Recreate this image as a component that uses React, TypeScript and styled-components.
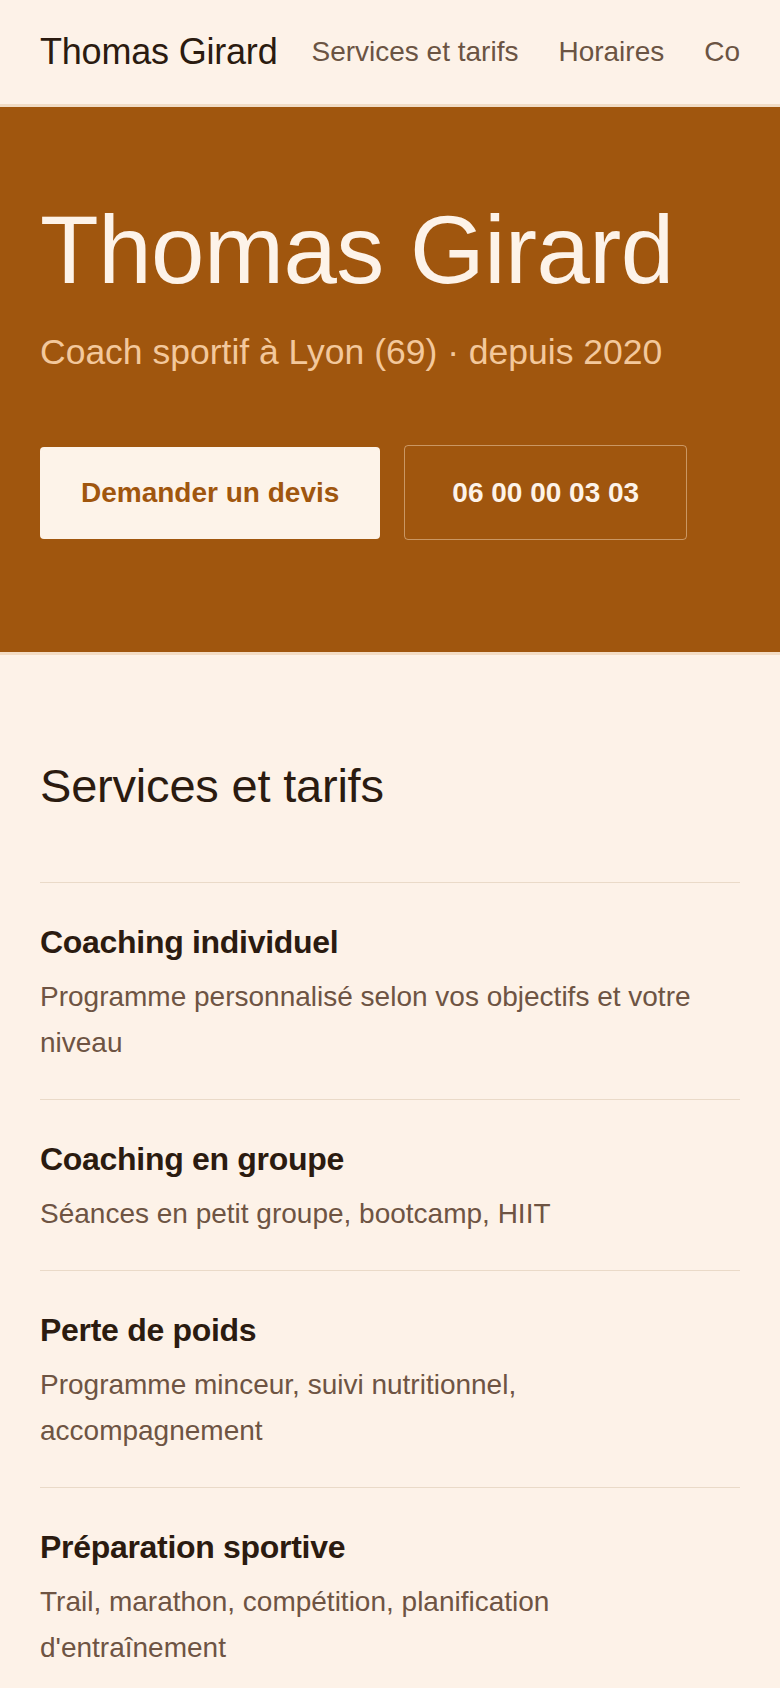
import React, {FC} from 'react';
import styled, {createGlobalStyle} from 'styled-components';

const GlobalStyle=createGlobalStyle`
html,body{
margin:0;
padding:0;
background:#fdf2e8;
}
body{
font-family:"Liberation Sans", Arial, sans-serif;
color:#2b1b10;
}
*{box-sizing:border-box;}
`;

const Page=styled.div`
display:flex;
flex-direction:column;
width:100%;
background:#fdf2e8;
`;

const Header=styled.header`
display:flex;
align-items:center;
height:107px;
padding:0 40px;
border-bottom:3px solid #f0dcc6;
gap:34px;
`;

const Logo=styled.div`
font-size:36px;
color:#2b1b10;
white-space:nowrap;
flex-shrink:0;
letter-spacing:-0.2px;
`;

const Nav=styled.nav`
display:flex;
gap:40px;
flex:1;
min-width:0;
overflow:hidden;
`;

const NavLink=styled.a`
font-size:28px;
color:#6b5443;
white-space:nowrap;
text-decoration:none;
flex-shrink:0;
`;

const Hero=styled.section`
display:flex;
flex-direction:column;
background:#a0560e;
padding:91px 40px 112px;
border-bottom:3px solid #f3dcc4;
`;

const HeroTitle=styled.h1`
margin:0;
font-size:96px;
font-weight:400;
line-height:104px;
color:#fdf3e9;
letter-spacing:-0.5px;
`;

const HeroSub=styled.p`
margin:27px 0 0;
font-size:35.5px;
line-height:46px;
color:#f3c89c;
`;

const Actions=styled.div`
display:flex;
align-items:center;
gap:24px;
margin-top:70px;
`;

const Button=styled.a<{$outline?:boolean}>`
display:flex;
align-items:center;
justify-content:center;
height:${p=>p.$outline?'95px':'92px'};
padding:0 ${p=>p.$outline?'47px':'41px'};
border-radius:4px;
font-size:28px;
font-weight:700;
text-decoration:none;
white-space:nowrap;
background:${p=>p.$outline?'transparent':'#fdf3e9'};
color:${p=>p.$outline?'#fdf3e9':'#a0560e'};
border:${p=>p.$outline?'1px solid rgba(253,230,205,0.45)':'none'};
`;

const Section=styled.section`
display:flex;
flex-direction:column;
padding:104px 40px 40px;
`;

const SectionTitle=styled.h2`
margin:0 0 69px;
font-size:47px;
font-weight:400;
line-height:54px;
color:#2b1b10;
letter-spacing:-0.2px;
`;

const List=styled.div`
display:flex;
flex-direction:column;
`;

const Item=styled.div`
display:flex;
flex-direction:column;
border-top:1px solid #eadac8;
padding:40px 0 33px;
`;

const ItemTitle=styled.h3`
margin:0;
font-size:32px;
font-weight:700;
line-height:39px;
color:#2b1b10;
letter-spacing:-0.3px;
`;

const ItemText=styled.p`
margin:12px 0 0;
max-width:680px;
font-size:28px;
line-height:46px;
color:#6e5443;
`;

const services=[
    {title:'Coaching individuel',text:'Programme personnalisé selon vos objectifs et votre niveau'},
    {title:'Coaching en groupe',text:'Séances en petit groupe, bootcamp, HIIT'},
    {title:'Perte de poids',text:'Programme minceur, suivi nutritionnel, accompagnement'},
    {title:'Préparation sportive',text:"Trail, marathon, compétition, planification d'entraînement"},
];

const App:FC=()=>{
    return(
        <Page>
            <GlobalStyle />
            <Header>
                <Logo>Thomas Girard</Logo>
                <Nav>
                    <NavLink href='#services'>Services et tarifs</NavLink>
                    <NavLink href='#horaires'>Horaires</NavLink>
                    <NavLink href='#contact'>Contact</NavLink>
                </Nav>
            </Header>
            <Hero>
                <HeroTitle>Thomas Girard</HeroTitle>
                <HeroSub>Coach sportif à Lyon (69) · depuis 2020</HeroSub>
                <Actions>
                    <Button href='#devis'>Demander un devis</Button>
                    <Button $outline href='tel:0600000303'>06 00 00 03 03</Button>
                </Actions>
            </Hero>
            <Section id='services'>
                <SectionTitle>Services et tarifs</SectionTitle>
                <List>
                    {services.map(s=>(
                        <Item key={s.title}>
                            <ItemTitle>{s.title}</ItemTitle>
                            <ItemText>{s.text}</ItemText>
                        </Item>
                    ))}
                </List>
            </Section>
        </Page>
    );
}

export default App;
